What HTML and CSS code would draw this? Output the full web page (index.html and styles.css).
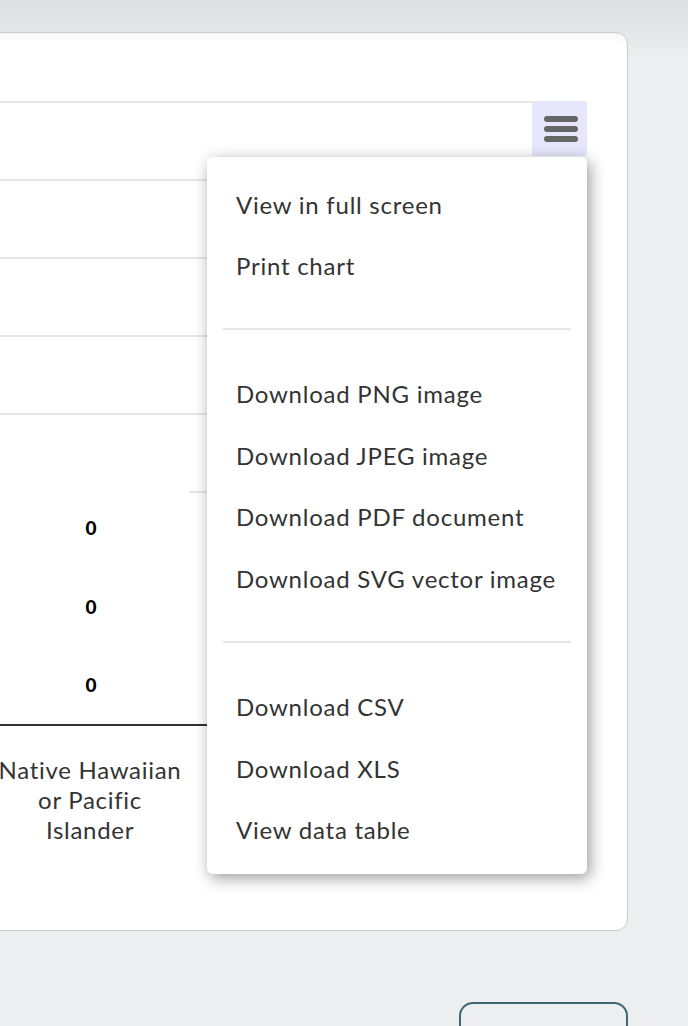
FILE: index.html
```html
<!DOCTYPE html>
<html lang="en">
<head>
    <title>Race and Ethnicity Chart</title>
    <link rel="stylesheet" href="styles.css">
</head>
<body>
    <div class="chart-card">
        <svg class="chart" width="668" height="897" viewBox="0 0 668 897">
            <!-- grid -->
            <g class="grid">
                <line x1="0" y1="69" x2="627" y2="69"></line>
                <line x1="0" y1="147" x2="627" y2="147"></line>
                <line x1="0" y1="225" x2="627" y2="225"></line>
                <line x1="0" y1="303" x2="627" y2="303"></line>
                <line x1="0" y1="381" x2="627" y2="381"></line>
                <line x1="229" y1="459" x2="627" y2="459"></line>
            </g>
            <line class="axis" x1="0" y1="692" x2="627" y2="692"></line>
            <!-- data labels -->
            <text class="data-label" x="131" y="502">0</text>
            <text class="data-label" x="131" y="581">0</text>
            <text class="data-label" x="131" y="659">0</text>
            <!-- category -->
            <text class="category" x="130" y="746">Native Hawaiian</text>
            <text class="category" x="130" y="776">or Pacific</text>
            <text class="category" x="130" y="806">Islander</text>
        </svg>

        <button class="menu-button" aria-label="Chart menu">
            <span></span><span></span><span></span>
        </button>

        <ul class="export-menu">
            <li>View in full screen</li>
            <li>Print chart</li>
            <li class="separator"></li>
            <li>Download PNG image</li>
            <li>Download JPEG image</li>
            <li>Download PDF document</li>
            <li>Download SVG vector image</li>
            <li class="separator"></li>
            <li>Download CSV</li>
            <li>Download XLS</li>
            <li>View data table</li>
        </ul>
    </div>

    <div class="actions">
        <button class="outline-button" aria-label="Next"></button>
    </div>
</body>
</html>
```

FILE: styles.css
```css
body {
    font-family: Lato, "Open Sans", sans-serif;
    margin: 0;
    padding: 0;
    background: linear-gradient(to bottom, #dcdee1 0, #eceef0 60px) no-repeat, #eceef0;
    overflow: hidden;
}

.chart-card {
    position: relative;
    width: 669px;
    height: 899px;
    box-sizing: border-box;
    margin: 32px 0 0 -41px;
    background-color: white;
    border: 1px solid #c9cbcf;
    border-radius: 12px;
    box-shadow: inset 0 10px 14px -10px rgba(0, 0, 0, 0.07);
}

.chart {
    display: block;
}

.grid line {
    stroke: #e6e6e6;
    stroke-width: 2;
}

.axis {
    stroke: #333;
    stroke-width: 2;
}

.data-label {
    font-family: Lato, sans-serif;
    font-weight: 900;
    font-size: 19px;
    fill: #000;
    text-anchor: middle;
}

.category {
    font-family: Lato, sans-serif;
    font-size: 24px;
    letter-spacing: 0.7px;
    fill: #333;
    text-anchor: middle;
}

.menu-button {
    position: absolute;
    left: 572px;
    top: 68px;
    width: 55px;
    height: 55px;
    padding: 15px 0 0 12px;
    box-sizing: border-box;
    background-color: #e6e7fb;
    border: none;
    border-radius: 3px;
    display: flex;
    flex-direction: column;
    gap: 4px;
}

.menu-button span {
    display: block;
    width: 34px;
    height: 6px;
    border-radius: 3px;
    background-color: #666;
}

.export-menu {
    position: absolute;
    left: 247px;
    top: 124px;
    width: 380px;
    margin: 0;
    padding: 16.5px 0 13.5px;
    box-sizing: border-box;
    list-style: none;
    background-color: white;
    border-radius: 6px;
    box-shadow: 3px 4px 16px rgba(0, 0, 0, 0.4);
}

.export-menu li {
    padding-left: 29px;
    height: 61.5px;
    line-height: 61.5px;
    font-size: 24px;
    letter-spacing: 0.75px;
    color: #333;
}

.export-menu .separator {
    height: 2px;
    padding: 0;
    margin: 31.5px 16px 33.25px;
    background-color: #e6e6e6;
}

.actions {
    display: flex;
    justify-content: flex-end;
    padding-right: 60px;
    margin-top: 71px;
}

.outline-button {
    width: 169px;
    height: 50px;
    background: transparent;
    border: 2px solid #3c6a72;
    border-radius: 14px;
}
```
